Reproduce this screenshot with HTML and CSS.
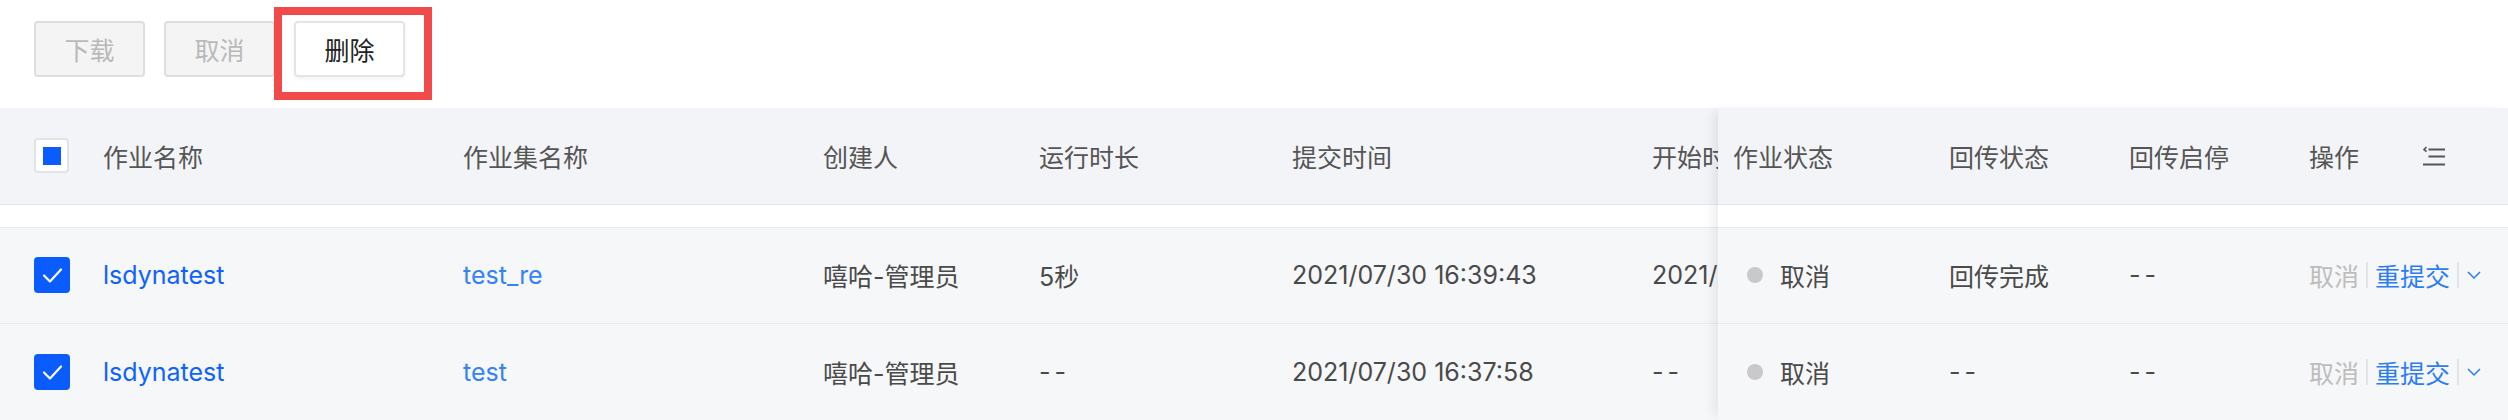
FILE: index.html
```html
<!DOCTYPE html>
<html lang="zh">
<head>
<meta charset="utf-8">
<link rel="stylesheet" href="styles.css">
</head>
<body>
<div class="toolbar">
  <button class="btn disabled">下载</button>
  <button class="btn disabled">取消</button>
  <div class="mark"><button class="btn">删除</button></div>
</div>
<div class="table">
  <div class="part scroll">
    <div class="row thead">
      <div class="cell chk"><span class="cb half"><i></i></span></div>
      <div class="cell">作业名称</div>
      <div class="cell">作业集名称</div>
      <div class="cell">创建人</div>
      <div class="cell">运行时长</div>
      <div class="cell">提交时间</div>
      <div class="cell">开始时间</div>
    </div>
    <div class="spacer"></div>
    <div class="row tr">
      <div class="cell chk"><span class="cb on"><svg viewBox="0 0 36 36"><path d="M10 18.5l6 6 11-12" fill="none" stroke="#fff" stroke-width="2.2" stroke-linecap="round" stroke-linejoin="round"/></svg></span></div>
      <div class="cell link dark">lsdynatest</div>
      <div class="cell link">test_re</div>
      <div class="cell">嘻哈-管理员</div>
      <div class="cell">5秒</div>
      <div class="cell">2021/07/30 16:39:43</div>
      <div class="cell">2021/07/30 16:39:45</div>
    </div>
    <div class="row tr">
      <div class="cell chk"><span class="cb on"><svg viewBox="0 0 36 36"><path d="M10 18.5l6 6 11-12" fill="none" stroke="#fff" stroke-width="2.2" stroke-linecap="round" stroke-linejoin="round"/></svg></span></div>
      <div class="cell link dark">lsdynatest</div>
      <div class="cell link">test</div>
      <div class="cell">嘻哈-管理员</div>
      <div class="cell dash">--</div>
      <div class="cell">2021/07/30 16:37:58</div>
      <div class="cell dash">--</div>
    </div>
  </div>
  <div class="part fixed">
    <div class="row thead">
      <div class="cell first">作业状态</div>
      <div class="cell">回传状态</div>
      <div class="cell">回传启停</div>
      <div class="cell op">操作<svg class="colicon" viewBox="0 0 24 22"><path d="M4.5 2.2L2 4.4l2.5 2.2" fill="none" stroke="#555" stroke-width="1.6"/><path d="M6.5 4.4H23M6.5 11.5H23M1 19.5H23" fill="none" stroke="#555" stroke-width="2"/></svg></div>
    </div>
    <div class="spacer"></div>
    <div class="row tr">
      <div class="cell first status"><span class="dot"></span>取消</div>
      <div class="cell">回传完成</div>
      <div class="cell dash">--</div>
      <div class="cell actions"><span class="act-off">取消</span><span class="sep"></span><span class="act">重提交</span><span class="sep"></span><svg class="chev" viewBox="0 0 14 9"><path d="M1 1l6 6 6-6" fill="none" stroke="#2c7cf6" stroke-width="1.5"/></svg></div>
    </div>
    <div class="row tr">
      <div class="cell first status"><span class="dot"></span>取消</div>
      <div class="cell dash">--</div>
      <div class="cell dash">--</div>
      <div class="cell actions"><span class="act-off">取消</span><span class="sep"></span><span class="act">重提交</span><span class="sep"></span><svg class="chev" viewBox="0 0 14 9"><path d="M1 1l6 6 6-6" fill="none" stroke="#2c7cf6" stroke-width="1.5"/></svg></div>
    </div>
  </div>
</div>
</body>
</html>
```

FILE: styles.css
```css
* { box-sizing: border-box; }
html, body { margin: 0; padding: 0; background: #fff; }
body {
  width: 2508px;
  height: 420px;
  overflow: hidden;
  font-family: Inter, "Noto Sans CJK SC", sans-serif;
  font-size: 25px;
  color: #4a4a4a;
}
.toolbar {
  height: 108px;
  padding: 21px 0 0 34px;
  display: flex;
  gap: 19px;
  align-items: flex-start;
}
.btn {
  width: 111px;
  height: 56px;
  border: 2px solid #e4e4e4;
  border-radius: 4px;
  background: #fff;
  font-family: inherit;
  font-size: 25px;
  color: #222;
  padding: 0;
  box-shadow: 0 2px 4px rgba(0,0,0,0.05);
}
.btn.disabled {
  background: #f4f4f4;
  border-color: #dedede;
  color: #b9b9b9;
  box-shadow: none;
}
.mark { position: relative; }
.mark::after {
  content: "";
  position: absolute;
  left: -20px; right: -27px; top: -14px; bottom: -23px;
  border: 8px solid #f04a4a;
  pointer-events: none;
}
.table { display: flex; height: 312px; }
.part { display: flex; flex-direction: column; }
.scroll { width: 1718px; overflow: hidden; }
.fixed {
  width: 790px;
  position: relative;
  box-shadow: -8px 0 12px -4px rgba(0,0,0,0.08);
  z-index: 1;
}
.row { display: grid; align-items: center; white-space: nowrap; }
.scroll .row { grid-template-columns: 103px 360px 360px 216px 253px 360px 360px; }
.fixed .row { grid-template-columns: 231px 180px 180px 199px; }
.thead {
  height: 97px;
  background: #f3f4f7;
  border-bottom: 1px solid #e6e7ea;
  color: #555;
  box-shadow: 0 3px 6px rgba(0,0,0,0.03);
}
.spacer { height: 22px; background: #fff; }
.tr {
  height: 97px;
  background: #f6f7f9;
  border-top: 1px solid #e9eaed;
}
.cell { overflow: hidden; }
.dash { letter-spacing: 4px; }
.chk { padding-left: 34px; display: flex; align-items: center; }
.cb {
  width: 36px; height: 36px; border-radius: 4px;
  display: flex; align-items: center; justify-content: center;
}
.cb.half { width: 35px; height: 35px; background: #fff; border: 2px solid #e2e3e6; }
.cb.half i { width: 18px; height: 18px; background: #0a5cff; display: block; }
.cb.on { background: #0a5cff; }
.cb svg { width: 36px; height: 36px; }
.link { color: #3583f6; }
.link.dark { color: #0f62fe; }
.first { padding-left: 15px; }
.status { display: flex; align-items: center; padding-left: 29px; }
.dot { width: 16px; height: 16px; border-radius: 50%; background: #c9c9cb; margin-right: 17px; }
.op { display: flex; align-items: center; }
.colicon { width: 24px; height: 22px; margin-left: 63px; }
.actions { display: flex; align-items: center; }
.act-off { color: #bdbdbd; }
.act { color: #2c7cf6; }
.sep { width: 2px; height: 26px; background: #e3e4e7; margin: 0 7px; }
.chev { width: 14px; height: 9px; margin-left: 1px; }
```
